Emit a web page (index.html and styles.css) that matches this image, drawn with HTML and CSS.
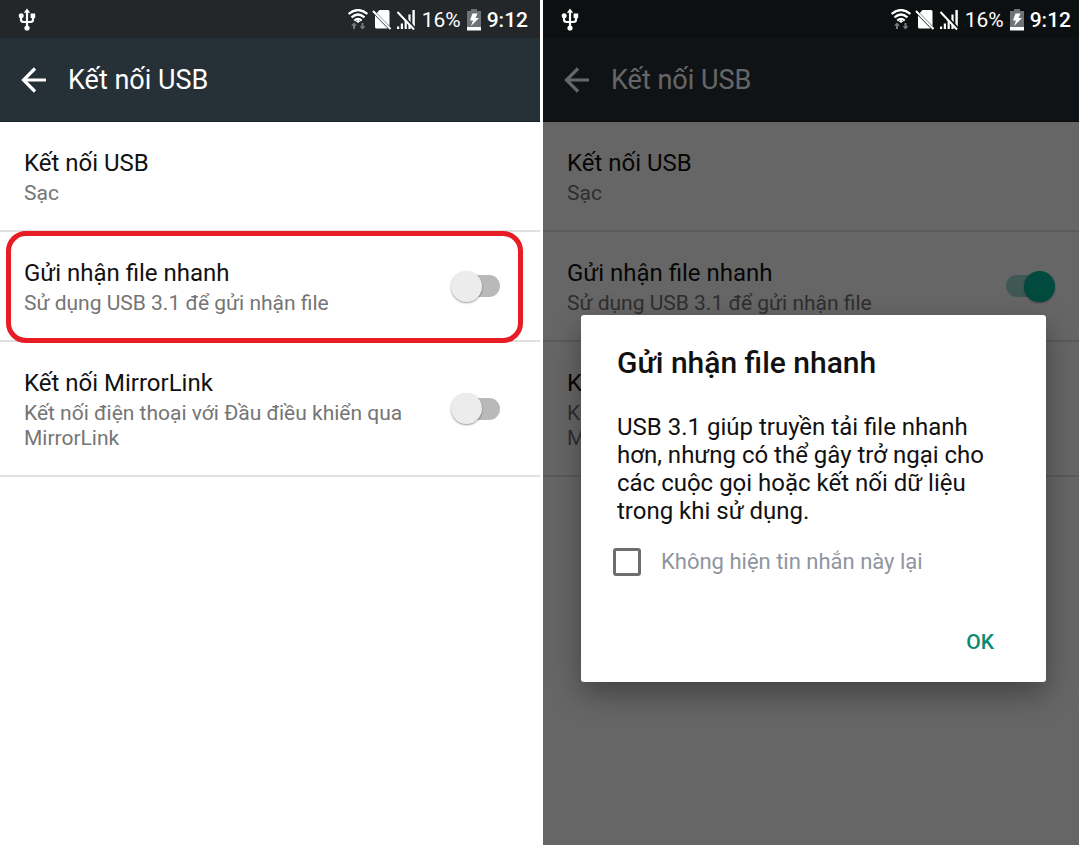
FILE: index.html
```html
<!DOCTYPE html>
<html lang="vi">
<head>
  <meta charset="UTF-8">
  <meta name="viewport" content="width=device-width, initial-scale=1.0">
  <title>Kết nối USB</title>
  <link rel="stylesheet" href="styles.css">
</head>
<body>
  <!-- Shared icons -->
  <svg class="icon-defs" aria-hidden="true">
    <symbol id="usb" viewBox="0 0 18 24">
      <path d="M9 3v17M3 8v3.500q0 2.500 2.500 2.500h7q2.500 0 2.500-2.500V8" fill="none" stroke="currentColor" stroke-width="2.200"/>
      <path d="M9 .5l3.200 4.300H5.800z" fill="currentColor"/>
      <circle cx="3.200" cy="7.800" r="2.500" fill="currentColor"/>
      <path d="M12.600 5.500h4.600v4.600h-4.600z" fill="currentColor"/>
      <circle cx="9" cy="20" r="2.600" fill="currentColor"/>
    </symbol>
    <symbol id="wifi" viewBox="0 0 20 22">
      <g fill="none" stroke="currentColor" stroke-width="2.200">
        <path d="M.6 5Q10-3 19.400 5"/>
        <path d="M3.500 8.400Q10 2.600 16.500 8.400"/>
        <path d="M6.300 11.600Q10 8.200 13.700 11.600"/>
      </g>
      <path d="M10 10.800l2.300 1.500L10 14l-2.300-1.700z" fill="currentColor"/>
      <path d="M6 13.500l3 3.300H7V20H5v-3.200H3zM14.500 20.500l-3-3.300h2V14h2v3.200h2z" fill="#777b7e"/>
    </symbol>
    <symbol id="no-sim" viewBox="0 0 20 22">
      <path d="M7.500 1H16q1.500 0 1.500 1.500v14.600L4.800 4zM3 6.500L15.700 19.500H4.500q-1.500 0-1.500-1.500z" fill="currentColor"/>
      <path d="M1 2L18.500 20" stroke="currentColor" stroke-width="2"/>
    </symbol>
    <symbol id="no-signal" viewBox="0 0 20 22">
      <path d="M1 17.500h2.200V20H1zM4.800 14.500H7V20H4.800zM8.600 10.500h2.200V20H8.600zM12.400 5.500h2.200V20h-2.200zM16.400 1h2.400v19h-2.400z" fill="currentColor"/>
      <path d="M3 3L19 20" stroke="var(--bar)" stroke-width="3"/>
      <path d="M1.500 3L18 20.500" stroke="currentColor" stroke-width="2"/>
    </symbol>
    <symbol id="battery" viewBox="0 0 14 22">
      <path d="M4 0h6v2h4v16H0V2h4z" fill="#6f7376"/>
      <path d="M0 18h14v3.500H0z" fill="currentColor"/>
      <path d="M5.500 4.500h5L8.500 9H12L4 17l2-5.500H3z" fill="currentColor"/>
    </symbol>
    <symbol id="back" viewBox="0 0 26 26">
      <path d="M25 13H2.500M14 1.500L2.500 13L14 24.500" fill="none" stroke="currentColor" stroke-width="3.200"/>
    </symbol>
  </svg>

  <main class="screens">
    <!-- Settings list -->
    <section class="screen">
      <div class="status-bar">
        <svg class="usb-icon"><use href="#usb"/></svg>
        <div class="status-info">
          <div class="status-icons">
            <svg class="status-icon"><use href="#wifi"/></svg>
            <svg class="status-icon"><use href="#no-sim"/></svg>
            <svg class="status-icon"><use href="#no-signal"/></svg>
          </div>
          <span>16%</span>
          <svg class="battery-icon"><use href="#battery"/></svg>
          <span class="clock">9:12</span>
        </div>
      </div>
      <header class="toolbar">
        <button class="back" type="button" aria-label="Quay lại">
          <svg><use href="#back"/></svg>
        </button>
        <h1>Kết nối USB</h1>
      </header>
      <ul class="settings">
        <li class="row">
          <button class="row-text" type="button">
            <span class="row-title">Kết nối USB</span>
            <span class="row-summary">Sạc</span>
          </button>
        </li>
        <li class="row highlighted">
          <label class="row-text" for="fast1">
            <span class="row-title">Gửi nhận file nhanh</span>
            <span class="row-summary">Sử dụng USB 3.1 để gửi nhận file</span>
          </label>
          <input class="switch" type="checkbox" id="fast1">
        </li>
        <li class="row">
          <label class="row-text" for="mirror1">
            <span class="row-title">Kết nối MirrorLink</span>
            <span class="row-summary">Kết nối điện thoại với Đầu điều khiển qua MirrorLink</span>
          </label>
          <input class="switch" type="checkbox" id="mirror1">
        </li>
      </ul>
    </section>

    <!-- Same list with the dialog open -->
    <section class="screen dimmed">
      <div class="status-bar">
        <svg class="usb-icon"><use href="#usb"/></svg>
        <div class="status-info">
          <div class="status-icons">
            <svg class="status-icon"><use href="#wifi"/></svg>
            <svg class="status-icon"><use href="#no-sim"/></svg>
            <svg class="status-icon"><use href="#no-signal"/></svg>
          </div>
          <span>16%</span>
          <svg class="battery-icon"><use href="#battery"/></svg>
          <span class="clock">9:12</span>
        </div>
      </div>
      <header class="toolbar">
        <button class="back" type="button" aria-label="Quay lại">
          <svg><use href="#back"/></svg>
        </button>
        <h1>Kết nối USB</h1>
      </header>
      <ul class="settings">
        <li class="row">
          <button class="row-text" type="button">
            <span class="row-title">Kết nối USB</span>
            <span class="row-summary">Sạc</span>
          </button>
        </li>
        <li class="row">
          <label class="row-text" for="fast2">
            <span class="row-title">Gửi nhận file nhanh</span>
            <span class="row-summary">Sử dụng USB 3.1 để gửi nhận file</span>
          </label>
          <input class="switch" type="checkbox" id="fast2" checked>
        </li>
        <li class="row">
          <label class="row-text" for="mirror2">
            <span class="row-title">Kết nối MirrorLink</span>
            <span class="row-summary">Kết nối điện thoại với Đầu điều khiển qua MirrorLink</span>
          </label>
          <input class="switch" type="checkbox" id="mirror2">
        </li>
      </ul>

      <div class="overlay">
        <div class="dialog" role="dialog" aria-labelledby="dialog-title">
          <h2 id="dialog-title">Gửi nhận file nhanh</h2>
          <p>USB 3.1 giúp truyền tải file nhanh hơn, nhưng có thể gây trở ngại cho các cuộc gọi hoặc kết nối dữ liệu trong khi sử dụng.</p>
          <label class="dont-show">
            <input type="checkbox">
            Không hiện tin nhắn này lại
          </label>
          <div class="actions">
            <button class="ok" type="button">OK</button>
          </div>
        </div>
      </div>
    </section>
  </main>
</body>
</html>
```
FILE: styles.css
```css
* {
  margin: 0;
  padding: 0;
  box-sizing: border-box;
}

body {
  font-family: Roboto, "Noto Sans", sans-serif;
  background-color: #fff;
  color: #111;
}

button {
  font: inherit;
  color: inherit;
  background: none;
  border: none;
  cursor: pointer;
}

.icon-defs {
  display: none;
}

.screens {
  display: flex;
  gap: 3px;
  min-height: 100vh;
}

.screen {
  --bar: #23272a;
  --edge: 12px;
  position: relative;
  flex: 540 1 0;
  overflow: hidden;
}

/* The second screen is slightly narrower */
.screen.dimmed {
  --bar: #0d1011;
  --edge: 8px;
  flex-grow: 536;
}

/* Status bar */
.status-bar {
  display: flex;
  justify-content: space-between;
  align-items: center;
  height: 38px;
  padding: 2px var(--edge) 0 18px;
  background-color: var(--bar);
  color: #fff;
  font-size: 21px;
}

.dimmed .status-bar {
  position: relative;
  z-index: 2;
}

.status-info {
  display: flex;
  align-items: center;
  gap: 6px;
}

.status-icons {
  display: flex;
  gap: 4px;
}

.usb-icon {
  width: 18px;
  height: 24px;
}

.status-icon {
  width: 20px;
  height: 22px;
}

.battery-icon {
  width: 14px;
  height: 22px;
}

.clock {
  font-weight: 500;
}

/* Toolbar */
.toolbar {
  display: flex;
  align-items: center;
  gap: 21px;
  height: 84px;
  padding: 1px 21px 0;
  background-color: #263037;
  border-bottom: 1px solid #1b2227;
  color: #fff;
}

.toolbar h1 {
  font-size: 27px;
  font-weight: 400;
}

.back svg {
  display: block;
  width: 26px;
  height: 26px;
}

/* Settings list */
.settings {
  list-style: none;
}

.row {
  position: relative;
  display: flex;
  align-items: center;
  padding: 26px calc(var(--edge) + 16px) 24px 24px;
  border-bottom: 2px solid #e0e0e0;
}

.row-text {
  display: flex;
  flex: 1;
  flex-direction: column;
  gap: 3px;
  text-align: left;
}

.row-title {
  font-size: 24px;
  line-height: 30px;
}

.row-summary {
  font-size: 21px;
  line-height: 25px;
  color: #757575;
}

.highlighted::after {
  content: "";
  position: absolute;
  inset: -1px 17px -3px 6px;
  border: 5px solid #e81c24;
  border-radius: 20px;
  pointer-events: none;
}

/* Switch */
.switch {
  appearance: none;
  position: relative;
  display: flex;
  align-items: center;
  width: 61px;
  height: 32px;
  margin-bottom: 2px;
  cursor: pointer;
}

.switch::before {
  content: "";
  position: absolute;
  inset: 5px 12px;
  border-radius: 11px;
  background-color: #b9b9b9;
}

.switch::after {
  content: "";
  position: relative;
  width: 31px;
  height: 31px;
  border-radius: 50%;
  background-color: #ececec;
  box-shadow: 0 1px 2px rgba(0, 0, 0, 0.4);
}

.switch:checked {
  justify-content: flex-end;
}

.switch:checked::before {
  background-color: #9fdccf;
}

.switch:checked::after {
  background-color: #00b89c;
}

/* Dialog */
.overlay {
  position: absolute;
  inset: 0;
  z-index: 1;
  padding: 315px 33px 0 38px;
  background-color: rgba(0, 0, 0, 0.6);
}

.dialog {
  padding: 30px 36px 16px;
  border-radius: 3px;
  background-color: #fff;
  box-shadow: 0 12px 30px rgba(0, 0, 0, 0.35);
}

.dialog h2 {
  margin-bottom: 32px;
  font-size: 30px;
  font-weight: 500;
  line-height: 36px;
}

.dialog p {
  margin-bottom: 23px;
  font-size: 24px;
  line-height: 28px;
}

.dont-show {
  display: flex;
  align-items: center;
  gap: 20px;
  margin-left: -4px;
  font-size: 22px;
  line-height: 28px;
  color: #8f959f;
}

.dont-show input {
  appearance: none;
  width: 28px;
  height: 28px;
  border: 3px solid #6e6e6e;
  border-radius: 3px;
}

.actions {
  display: flex;
  justify-content: flex-end;
  margin-top: 42px;
}

.ok {
  padding: 12px 16px;
  font-size: 21px;
  font-weight: 500;
  line-height: 24px;
  color: #0d8973;
}
```
